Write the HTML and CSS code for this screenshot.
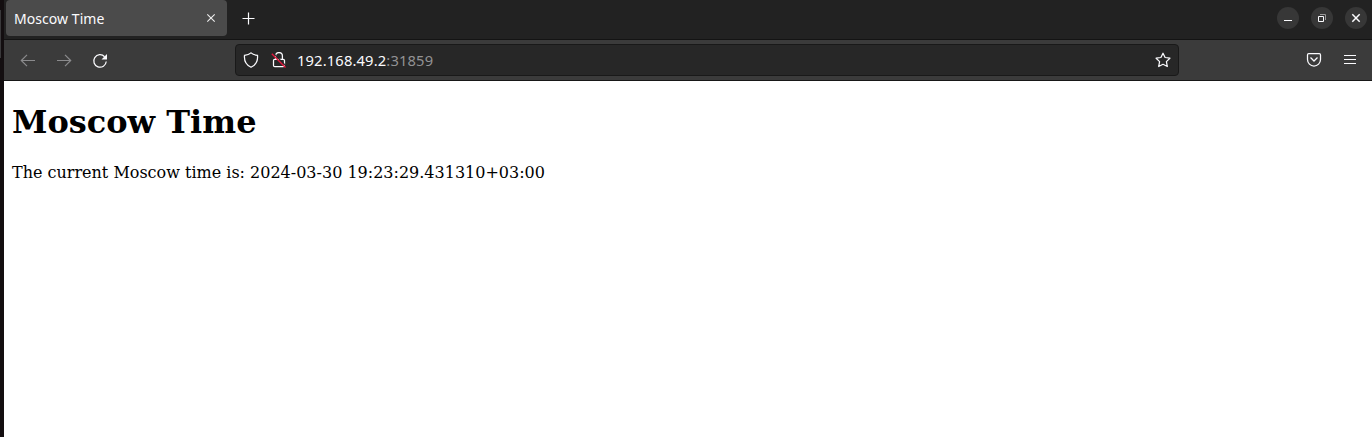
FILE: index.html
```html
<!DOCTYPE html>
<html lang="en">
<head>
<meta charset="utf-8">
<title>Moscow Time</title>
<link rel="stylesheet" href="styles.css">
</head>
<body>
<div class="desktop-edge"><div class="edge-mark"></div></div>
<div class="window">
  <div class="tab-bar">
    <div class="tab">
      <span class="tab-title">Moscow Time</span>
      <svg class="tab-close" width="10" height="10" viewBox="0 0 10 10"><path d="M1.3 1.3l7.4 7.4M8.7 1.3L1.3 8.7"/></svg>
    </div>
    <svg class="new-tab" width="13" height="13" viewBox="0 0 13 13"><path d="M6.500 .5v12M.5 6.500h12"/></svg>
    <div class="window-controls">
      <span class="control"><svg width="22" height="22" viewBox="0 0 22 22"><path d="M7 13.500h8"/></svg></span>
      <span class="control"><svg width="22" height="22" viewBox="0 0 22 22"><path d="M7.500 9.500h5v5h-5z"/><path class="faint" d="M9 7.500h5.500v5.500"/></svg></span>
      <span class="control"><svg width="22" height="22" viewBox="0 0 22 22"><path class="cross" d="M7.300 7.300l7.400 7.400M14.700 7.300l-7.400 7.400"/></svg></span>
    </div>
  </div>
  <div class="toolbar">
    <div class="navigation">
      <svg class="disabled" width="16" height="16" viewBox="0 0 16 16"><path d="M15 7.500H1.600M7 1.800L1.300 7.500L7 13.200"/></svg>
      <svg class="disabled" width="16" height="16" viewBox="0 0 16 16"><path d="M1 7.500h13.400M9 1.800L14.700 7.500L9 13.200"/></svg>
      <svg width="16" height="16" viewBox="0 0 16 16"><path class="medium" d="M12.600 3.700A6.250 6.250 0 1 0 14.250 8.500"/><path class="solid" d="M15 1v5.500H9.500z"/></svg>
    </div>
    <div class="address">
      <svg width="16" height="16" viewBox="0 0 16 16"><path class="medium" d="M8 .9C6.500 2.200 3.700 3.100 1.500 3.300C1 8.500 3.200 13 8 15.200C12.800 13 15 8.500 14.500 3.300C12.300 3.100 9.500 2.200 8 .9z"/></svg>
      <svg class="lock" width="16" height="16" viewBox="0 0 16 16"><path class="medium" d="M4.600 7V4a3.400 3.400 0 0 1 6.800 0v3M3.700 7.300h8.600q1.200 0 1.200 1.200v5q0 1.200-1.200 1.200H3.700q-1.200 0-1.200-1.200v-5q0-1.200 1.200-1.200z"/><path class="gap" d="M2 .8l13 13"/><path class="slash" d="M.8 1.800l13.700 13.700"/></svg>
      <span class="url">192.168.49.2<span class="port">:31859</span></span>
      <svg class="star" width="16" height="16" viewBox="0 0 16 16"><path class="star-outline" d="M8 1.200l2.100 4.300 4.800.7-3.500 3.400.9 4.900L8 12.300 3.700 14.500l.9-4.900L1.100 6.200l4.800-.7z"/></svg>
    </div>
    <div class="actions">
      <svg width="16" height="16" viewBox="0 0 16 16"><path class="medium" d="M2.700 1.700h10.600q1.200 0 1.200 1.200v4.600a6.500 6.500 0 0 1-13 0V2.900q0-1.200 1.200-1.200z"/><path class="medium" d="M4.500 5.500L8 9 11.500 5.500"/></svg>
      <svg class="menu" width="16" height="16" viewBox="0 0 16 16"><path d="M2 2.500h12M2 6.500h12M2 10.500h12"/></svg>
    </div>
  </div>
  <main class="page">
    <h1 class="heading">Moscow Time</h1>
    <p class="time">The current Moscow time is: 2024-03-30 19:23:29.431310+03:00</p>
  </main>
</div>
</body>
</html>
```
FILE: styles.css
```css
* { box-sizing: border-box; }
body {
  margin: 0;
  height: 437px;
  display: flex;
  overflow: hidden;
  background: #fff;
  font-family: "Noto Sans", sans-serif;
}
svg {
  display: block;
  flex: none;
  fill: none;
  stroke: #fbfbfe;
  stroke-width: 1;
}
.desktop-edge {
  width: 4px;
  flex: none;
  padding-top: 10px;
  background: #130e10;
}
.edge-mark { width: 1px; height: 48px; background: #39383a; }
.window { flex: 1; display: flex; flex-direction: column; }
.tab-bar {
  height: 40px;
  flex: none;
  display: flex;
  align-items: flex-start;
  padding-left: 2px;
  background: #222;
  border-bottom: 1px solid #141414;
}
.tab {
  width: 221px;
  height: 36px;
  display: flex;
  align-items: center;
  justify-content: space-between;
  padding: 0 11px 0 8px;
  border-radius: 4px;
  background: #4b4b4b;
}
.tab-title {
  color: #fbfbfe;
  font-size: 14px;
  letter-spacing: .06px;
  line-height: 20px;
  padding-top: 2px;
}
.tab-close { stroke: #eee; stroke-width: 1.1; }
.new-tab { margin: 12px 0 0 15px; stroke-width: 1.2; }
.window-controls {
  display: flex;
  gap: 12px;
  margin: 7px 5px 0 auto;
}
.control {
  width: 22px;
  height: 22px;
  border-radius: 50%;
  background: #373737;
}
.faint { stroke: #999; }
.cross { stroke-width: 1.5; }
.toolbar {
  height: 41px;
  flex: none;
  display: flex;
  align-items: center;
  background: #3b3b3b;
  border-bottom: 1px solid #171717;
}
.navigation {
  width: 231px;
  display: flex;
  gap: 20px;
  padding: 2px 0 0 16px;
}
.disabled { stroke: #8b8b8d; stroke-width: 1.2; }
.medium { stroke-width: 1.25; }
.star-outline { stroke-width: 1.25; stroke-linejoin: round; }
.solid { fill: #fbfbfe; stroke: none; }
.address {
  width: 944px;
  height: 32px;
  display: flex;
  align-items: center;
  padding: 0 7px;
  border: 1px solid #191919;
  border-radius: 4px;
  background: #272727;
}
.lock { margin-left: 12px; }
.gap { stroke: #272727; stroke-width: 1.2; }
.slash { stroke: #e2173d; stroke-width: 1.4; }
.url {
  margin-left: 10px;
  padding-bottom: 1px;
  font-size: 14.700px;
  letter-spacing: .16px;
  line-height: 20px;
  color: #fbfbfe;
}
.port { color: #929294; }
.star { margin-left: auto; }
.actions {
  display: flex;
  gap: 20px;
  margin: 0 14px 0 auto;
}
.menu { margin-top: 1px; }
.page {
  flex: 1;
  padding: 22px 8px 0;
  font-family: "DejaVu Serif", serif;
  font-size: 16px;
  color: #000;
}
.heading { margin: 0 0 22px; font-size: 32px; }
.time { margin: 0; }
```
